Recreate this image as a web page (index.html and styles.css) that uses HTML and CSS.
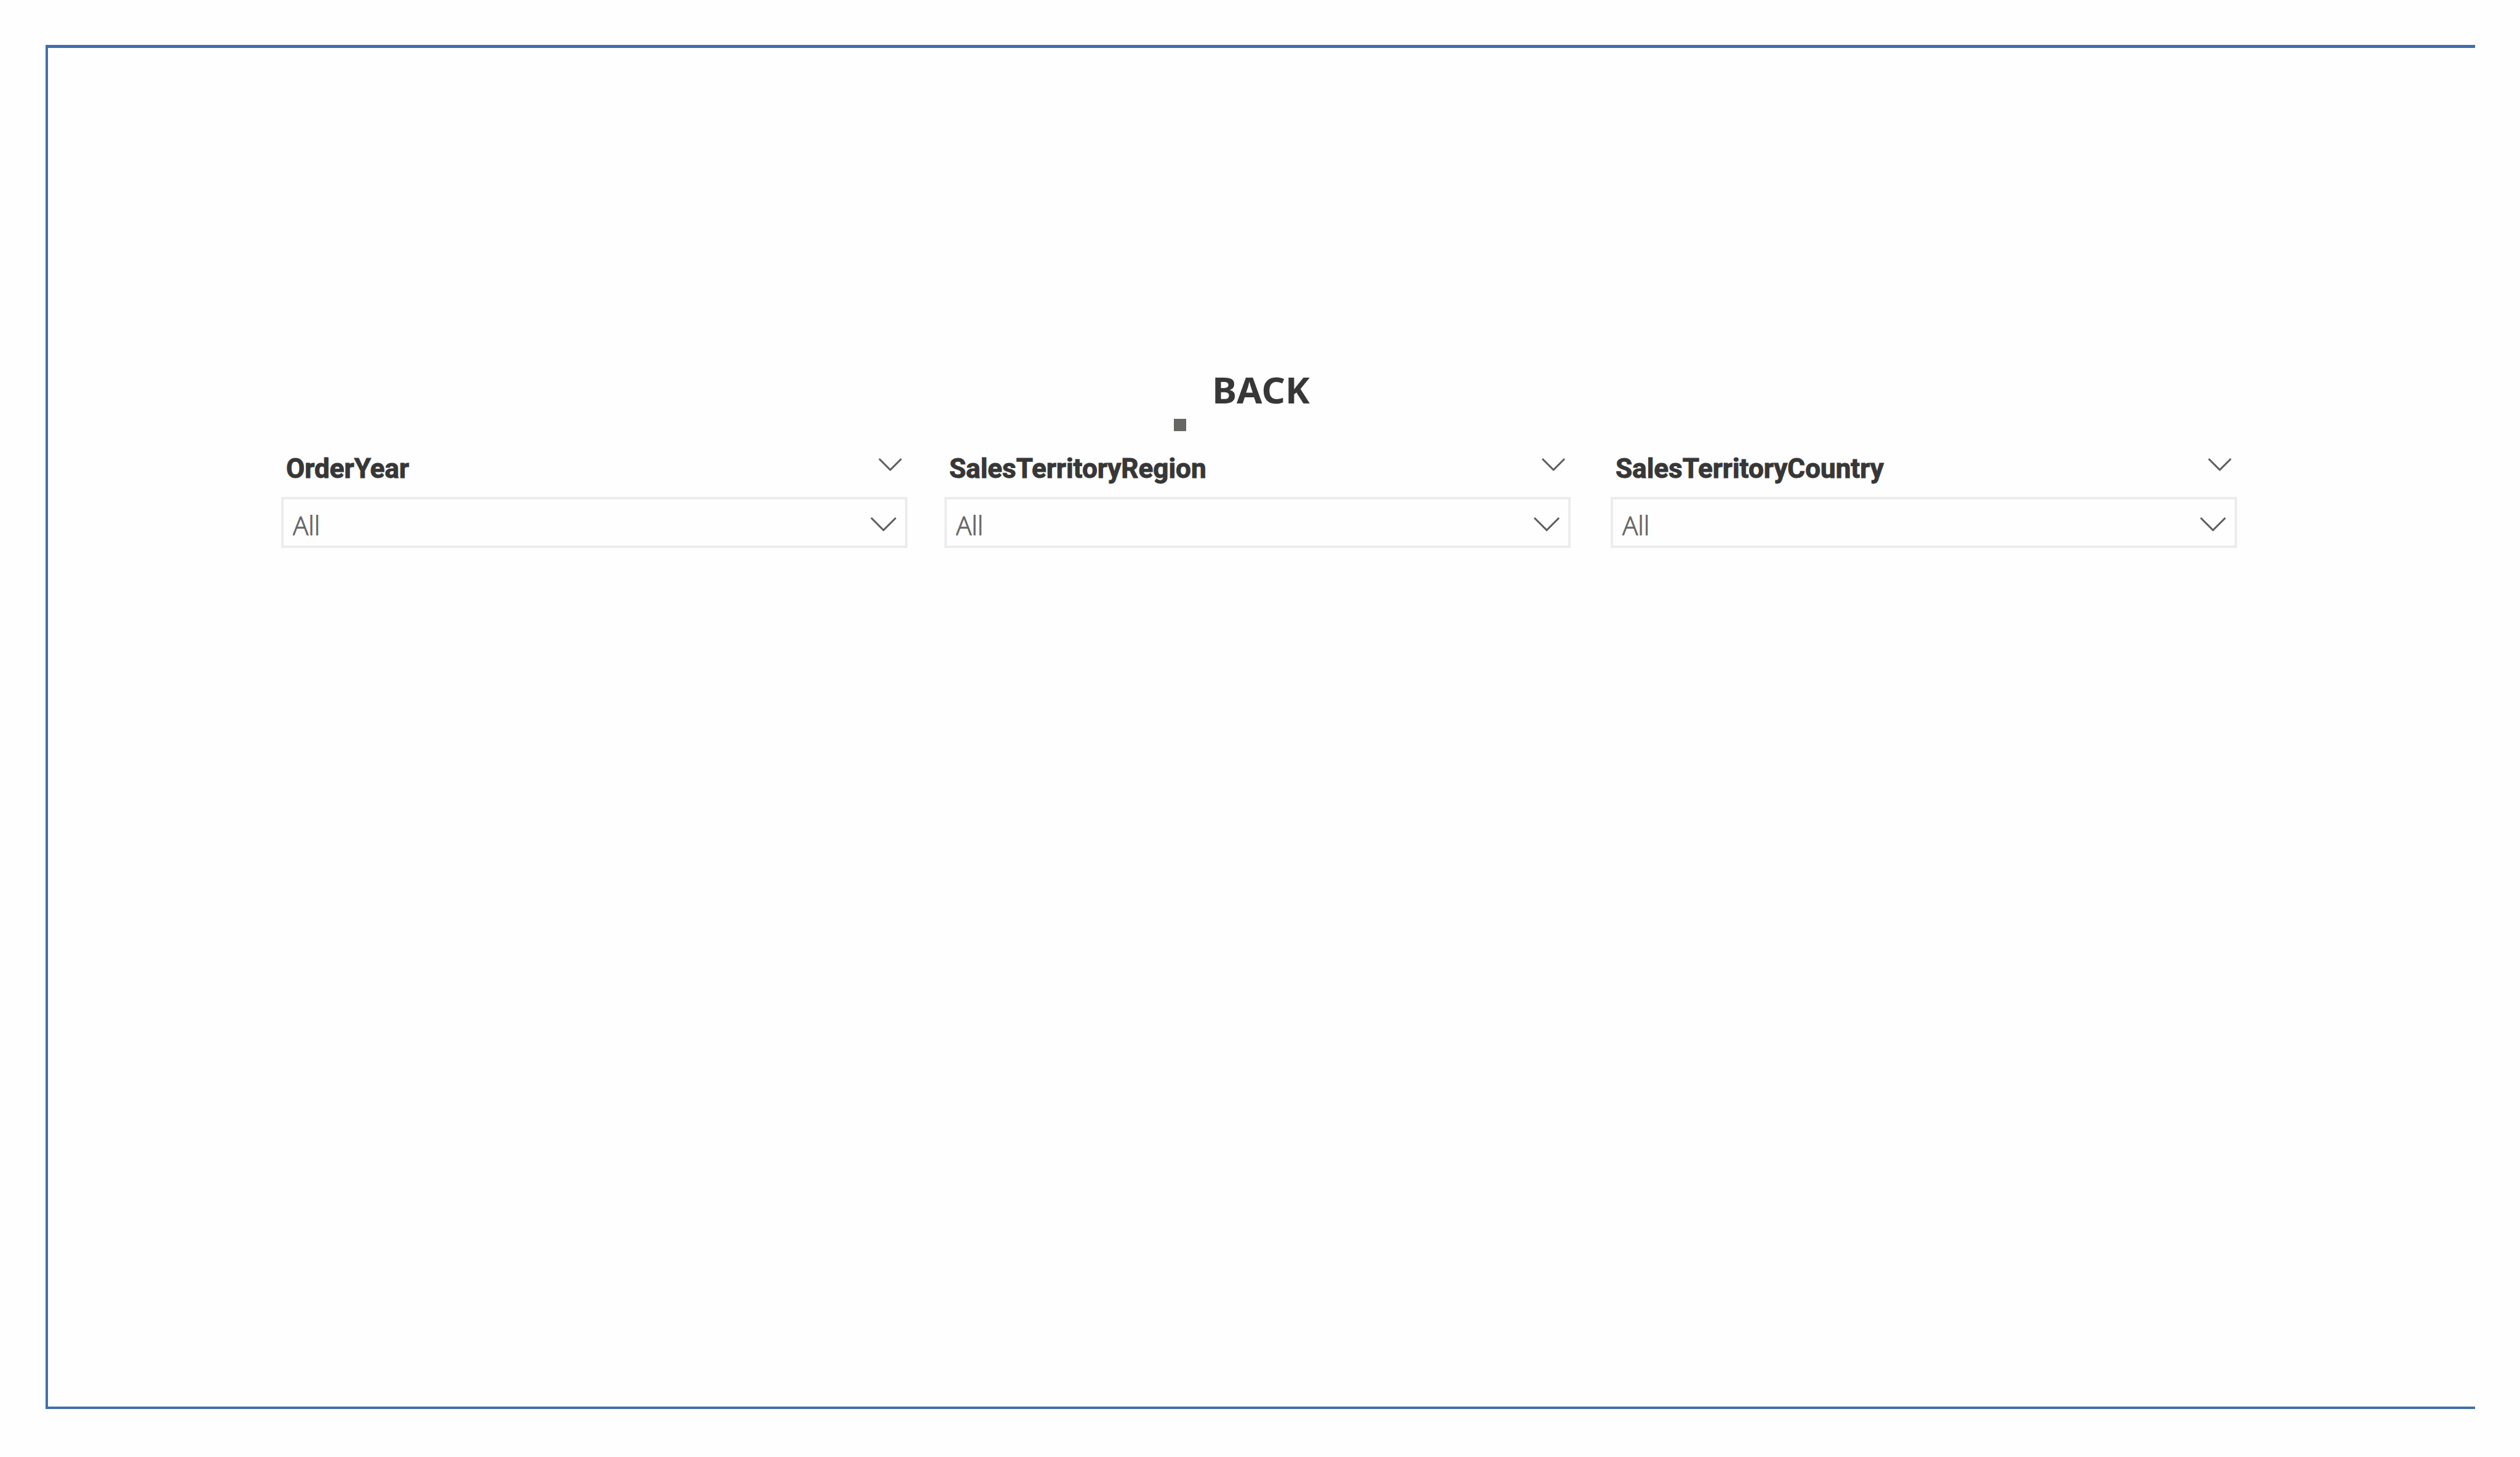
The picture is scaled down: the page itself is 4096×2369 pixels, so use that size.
FILE: index.html
```
<!DOCTYPE html>
<html lang="en">
<head>
<meta charset="utf-8">
<title>Sales filters</title>
<link rel="stylesheet" href="styles.css">
</head>
<body>
<main class="frame">
  <nav class="toolbar">
    <span class="marker"></span>
    <button class="back" type="button">BACK</button>
  </nav>
  <section class="filters">
    <div class="filter">
      <div class="filter-head">
        <label class="filter-title" for="order-year">OrderYear</label>
        <button class="filter-menu" type="button" aria-label="OrderYear options"><svg viewBox="0 0 40 48"><path d="M2 8L20 26L38 8"/></svg></button>
      </div>
      <div class="filter-box">
        <select class="filter-select" id="order-year"><option>All</option></select>
        <svg class="filter-arrow" viewBox="0 0 44 24"><path d="M2 2L22 22L42 2"/></svg>
      </div>
    </div>
    <div class="filter">
      <div class="filter-head">
        <label class="filter-title" for="region">SalesTerritoryRegion</label>
        <button class="filter-menu" type="button" aria-label="SalesTerritoryRegion options"><svg viewBox="0 0 40 48"><path d="M2 8L20 26L38 8"/></svg></button>
      </div>
      <div class="filter-box">
        <select class="filter-select" id="region"><option>All</option></select>
        <svg class="filter-arrow" viewBox="0 0 44 24"><path d="M2 2L22 22L42 2"/></svg>
      </div>
    </div>
    <div class="filter">
      <div class="filter-head">
        <label class="filter-title" for="country">SalesTerritoryCountry</label>
        <button class="filter-menu" type="button" aria-label="SalesTerritoryCountry options"><svg viewBox="0 0 40 48"><path d="M2 8L20 26L38 8"/></svg></button>
      </div>
      <div class="filter-box">
        <select class="filter-select" id="country"><option>All</option></select>
        <svg class="filter-arrow" viewBox="0 0 44 24"><path d="M2 2L22 22L42 2"/></svg>
      </div>
    </div>
  </section>
</main>
</body>
</html>
```
FILE: styles.css
```
* { box-sizing: border-box; }

body {
  margin: 0;
  min-height: 100vh;
  padding: 73px 73px 78px 74px;
  display: flex;
  background: #fefefe;
  color: #373737;
}

.frame {
  flex: 1;
  padding: 525px 387px 0 379px;
  border: 4px solid #416fab;
  border-width: 5px 0 4px 4px;
}

.toolbar {
  display: flex;
  justify-content: center;
  align-items: flex-end;
  gap: 42px;
  padding-right: 56px;
  margin-bottom: 37px;
}

.marker {
  width: 20px;
  height: 20px;
  background: #666663;
}

.back {
  padding: 0 0 38px;
  border: 0;
  background: none;
  color: inherit;
  font: bold 60px/60px "Noto Sans", sans-serif;
}

.filters {
  display: grid;
  grid-template-columns: 1fr 60px 1fr 65px 1fr;
}

.filter:nth-child(2) { grid-column: 3; }
.filter:nth-child(3) { grid-column: 5; }

.filter-head {
  display: flex;
  justify-content: space-between;
  padding: 0 8px;
  margin-bottom: 22px;
}

.filter-title {
  font: bold 44px/48px Roboto, sans-serif;
  -webkit-text-stroke: 1px currentColor;
}

.filter-menu {
  width: 40px;
  height: 48px;
  padding: 0;
  border: 0;
  background: none;
}

svg {
  display: block;
  fill: none;
  stroke: #5c5c5c;
  stroke-width: 3;
}

.filter-box {
  display: grid;
  align-items: center;
}

.filter-select {
  grid-area: 1 / 1;
  width: 100%;
  height: 83px;
  padding: 8px 80px 0 15px;
  border: 4px solid #ececec;
  border-radius: 0;
  appearance: none;
  background: #fefefe;
  color: #666;
  font: 300 42px/57px "Open Sans", sans-serif;
  -webkit-text-stroke: 1px currentColor;
}

.filter-arrow {
  grid-area: 1 / 1;
  justify-self: end;
  width: 44px;
  height: 24px;
  margin-top: 4px;
  margin-right: 17px;
  pointer-events: none;
}
```
